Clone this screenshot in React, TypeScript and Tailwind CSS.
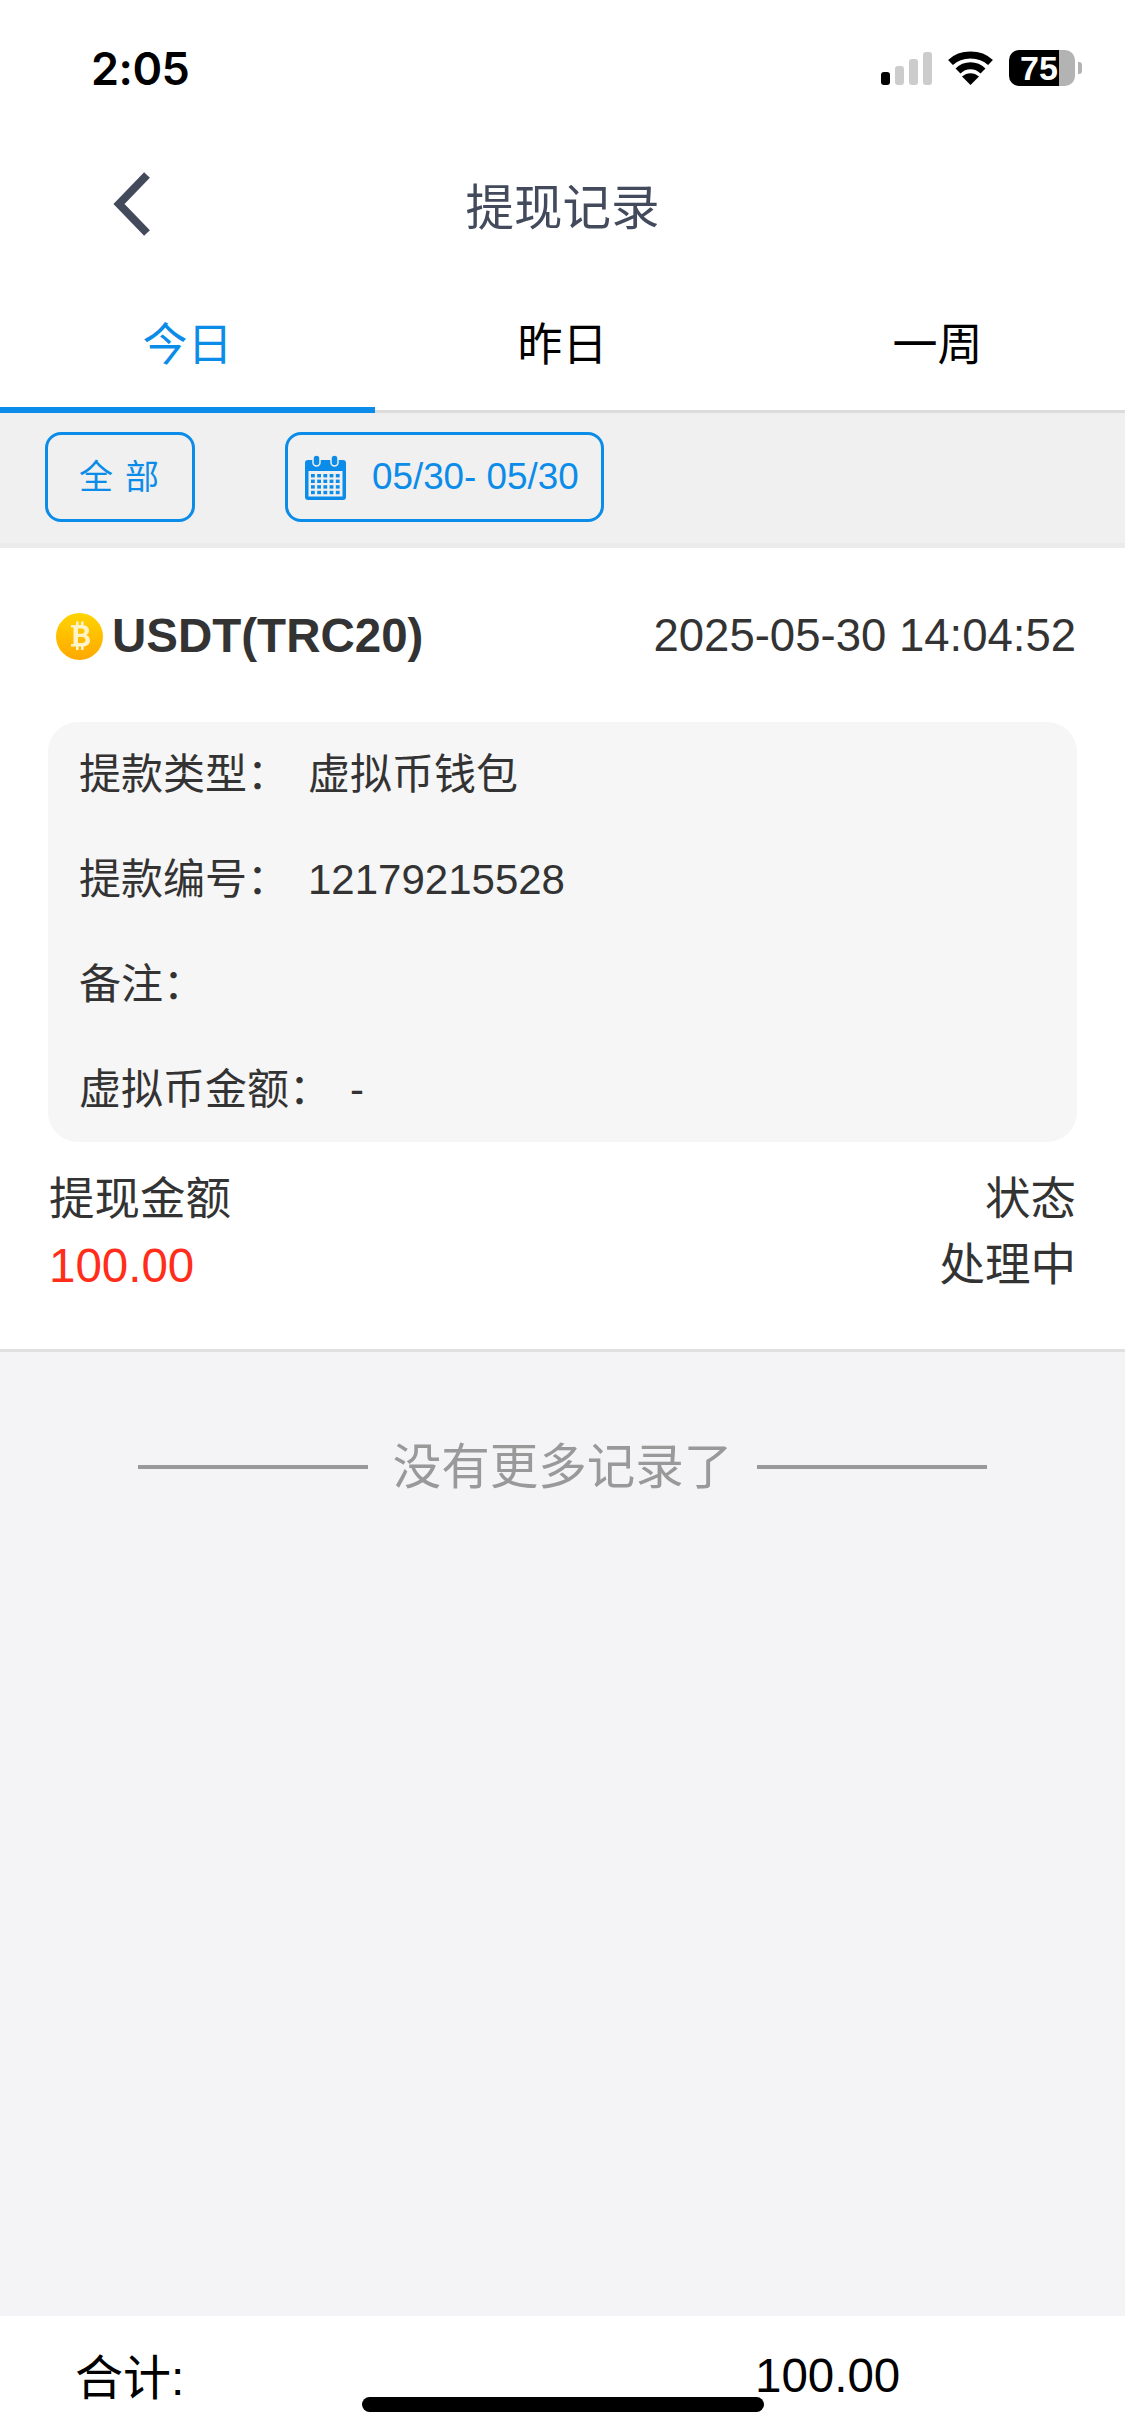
const FONT = "font-['Liberation_Sans','Noto_Sans_CJK_SC',sans-serif]";

const DETAILS = [
  { label: "提款类型：", value: "虚拟币钱包" },
  { label: "提款编号：", value: "12179215528" },
  { label: "备注：", value: "" },
  { label: "虚拟币金额：", value: "-" },
];

function StatusIcons() {
  return (
    <div className="flex items-center">
      <svg width="52" height="33" viewBox="0 0 52 33">
        <rect x="0" y="20" width="9" height="13" rx="3" fill="#000" />
        <rect x="14" y="14" width="9" height="19" rx="3" fill="#ccc" />
        <rect x="28" y="7" width="9" height="26" rx="3" fill="#ccc" />
        <rect x="42" y="0" width="9" height="33" rx="3" fill="#ccc" />
      </svg>
      <svg className="ml-[14px]" width="47" height="34" viewBox="0 0 47 34">
        <path d="M3.5 11.5 C14 1.5 33 1.5 43.5 11.5" fill="none" stroke="#000" strokeWidth="7" strokeLinecap="butt" />
        <path d="M11 20 C18 13 29 13 36 20" fill="none" stroke="#000" strokeWidth="7" strokeLinecap="butt" />
        <path d="M15 25.5 C20 21 27 21 32 25.5 L23.5 34 Z" fill="#000" />
      </svg>
      <div className="ml-[15px] flex h-[36px] w-[66px] items-center rounded-[10px] bg-[linear-gradient(90deg,#000_50px,#b3b3b3_50px)] pl-[11px] text-[34px] leading-none font-bold text-white">
        75
      </div>
      <div className="ml-[3px] h-[12px] w-[4px] rounded-r-[3px] bg-[#b3b3b3]" />
    </div>
  );
}

function CoinIcon() {
  return (
    <svg width="47" height="47" viewBox="0 0 47 47">
      <defs>
        <linearGradient id="coin" x1="0" y1="0" x2="0" y2="1">
          <stop offset="0" stopColor="#ffd400" />
          <stop offset="1" stopColor="#ffa800" />
        </linearGradient>
      </defs>
      <circle cx="23.5" cy="23.5" r="23.5" fill="url(#coin)" />
      <path
        d="M15 12 H26 C31 12 33 15 33 17.5 C33 20 31.5 21.5 30 22 C32.5 22.7 34 25 34 27.5 C34 31 31 33.5 27 33.5 H15 V31 H17.5 V14.5 H15 Z M22 15.5 V20.7 H25.5 C27.5 20.7 28.5 19.6 28.5 18 C28.5 16.5 27.5 15.5 25.5 15.5 Z M22 24 V30 H26 C28.2 30 29.5 28.8 29.5 27 C29.5 25.2 28.2 24 26 24 Z"
        fill="#fff4c8"
      />
      <rect x="20" y="8.5" width="2.6" height="4" fill="#fff4c8" />
      <rect x="25" y="8.5" width="2.6" height="4" fill="#fff4c8" />
      <rect x="20" y="33" width="2.6" height="4" fill="#fff4c8" />
      <rect x="25" y="33" width="2.6" height="4" fill="#fff4c8" />
    </svg>
  );
}

function CalendarIcon() {
  const cells = [];
  for (let r = 0; r < 4; r++) {
    for (let c = 0; c < 5; c++) {
      cells.push(<rect key={r + "-" + c} x={6 + c * 6.2} y={19 + r * 5.6} width="3.8" height="3.4" fill="#0c8ce9" />);
    }
  }
  return (
    <svg width="41" height="45" viewBox="0 0 41 45">
      <path d="M3 5 H38 Q41 5 41 8 V42 Q41 45 38 45 H3 Q0 45 0 42 V8 Q0 5 3 5 Z" fill="#0c8ce9" />
      <rect x="3.5" y="16" width="34" height="25.5" fill="#efefef" />
      <rect x="8" y="0" width="7" height="11" rx="3.5" fill="#0c8ce9" stroke="#efefef" strokeWidth="1.5" />
      <rect x="26" y="0" width="7" height="11" rx="3.5" fill="#0c8ce9" stroke="#efefef" strokeWidth="1.5" />
      {cells}
    </svg>
  );
}

export default function App() {
  return (
    <div className={`${FONT} flex h-[2436px] w-[1125px] flex-col overflow-hidden bg-white`}>
      {/* status bar */}
      <div className="flex h-[136px] items-center justify-between pr-[43px] pl-[91px]">
        <span className="font-['Inter',sans-serif] text-[45px] leading-none font-semibold tracking-[-0.5px] text-black">2:05</span>
        <StatusIcons />
      </div>

      {/* nav */}
      <div className="relative flex h-[144px] items-center justify-center">
        <svg className="absolute top-[35px] left-[112px]" width="42" height="66" viewBox="0 0 42 66">
          <polyline points="35,4 7,33 35,62" fill="none" stroke="#434a5c" strokeWidth="8" />
        </svg>
        <span className="text-[48.5px] leading-none text-[#434a5c]">提现记录</span>
      </div>

      {/* tabs */}
      <div className="flex h-[133px] border-b-[3px] border-[#dcdcdc] pt-[2px]">
        <div className="relative flex flex-1 items-center justify-center text-[45px] text-[#0c8ce9]">
          今日
          <div className="absolute right-0 bottom-[-3px] left-0 h-[6px] bg-[#0c8ce9]" />
        </div>
        <div className="flex flex-1 items-center justify-center text-[45px] text-black">昨日</div>
        <div className="flex flex-1 items-center justify-center text-[45px] text-black">一周</div>
      </div>

      {/* filters */}
      <div className="flex h-[135px] gap-[90px] border-b-[5px] border-[#ebebeb] bg-[#f0f0f0] pt-[19px] pl-[45px]">
        <div className="flex h-[90px] w-[150px] items-center justify-center rounded-[16px] border-[3px] border-[#0c8ce9] text-[34px] tracking-[12px] text-[#0c8ce9]">
          <span className="ml-[10px]">全部</span>
        </div>
        <div className="flex h-[90px] w-[319px] items-center gap-[26px] rounded-[16px] border-[3px] border-[#0c8ce9] pl-[17px] text-[36.8px] text-[#0c8ce9]">
          <CalendarIcon />
          <span>05/30- 05/30</span>
        </div>
      </div>

      {/* record */}
      <div className="border-b-[3px] border-[#e0e0e0] bg-white px-[48px] pb-[49px]">
        <div className="mt-[64px] mb-[62px] flex h-[48px] items-center justify-between">
          <div className="flex items-center gap-[9px] pl-[8px]">
            <CoinIcon />
            <span className="text-[47.5px] leading-none font-bold text-[#333]">USDT(TRC20)</span>
          </div>
          <span className="mr-[1px] text-[45.5px] leading-none text-[#333]">2025-05-30 14:04:52</span>
        </div>

        <div className="flex flex-col rounded-[30px] bg-[#f6f6f6] pl-[31px]">
          {DETAILS.map((row) => (
            <div key={row.label} className="flex h-[105px] items-center gap-[19px] text-[42px] text-[#333]">
              <span>{row.label}</span>
              <span>{row.value}</span>
            </div>
          ))}
        </div>

        <div className="grid grid-cols-2 grid-rows-[68px_68px] items-center pt-[22px] pr-[1px] pl-[1px]">
          <span className="pt-[3px] text-[45.5px] leading-none text-[#333]">提现金额</span>
          <span className="pt-[3px] text-right text-[45.5px] leading-none text-[#333]">状态</span>
          <span className="text-[47.5px] leading-none text-[#ff2d1a]">100.00</span>
          <span className="text-right text-[45.5px] leading-none text-[#333]">处理中</span>
        </div>
      </div>

      {/* end of list */}
      <div className="flex flex-1 justify-center gap-[25px] bg-[#f4f4f6] pt-[85px]">
        <div className="mt-[28px] h-[4px] w-[230px] bg-[#999]" />
        <span className="text-[48.5px] leading-[60px] text-[#999]">没有更多记录了</span>
        <div className="mt-[28px] h-[4px] w-[230px] bg-[#999]" />
      </div>

      {/* total */}
      <div className="relative flex h-[120px] items-center bg-white pl-[75px] text-black">
        <span className="w-[680px] pt-[5px] text-[48px] leading-none">合计:</span>
        <span className="text-[47.5px] leading-none">100.00</span>
        <div className="absolute top-[81px] left-[362px] h-[15px] w-[402px] rounded-full bg-black" />
      </div>
    </div>
  );
}
